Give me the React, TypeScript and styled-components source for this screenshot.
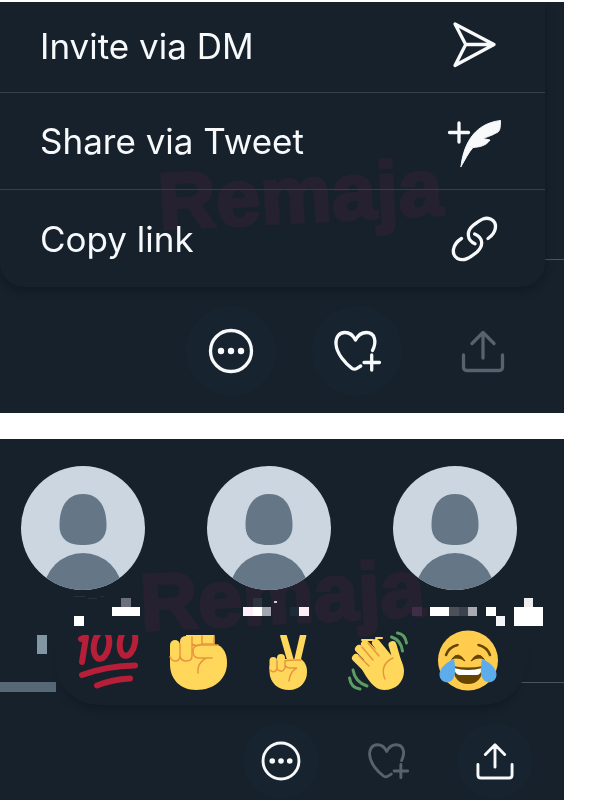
import React from "react";
import styled, { createGlobalStyle } from "styled-components";

const Global = createGlobalStyle`
  * { box-sizing: border-box; }
  html, body { margin: 0; background: #fff; }
  body { font-family: Inter, "Liberation Sans", sans-serif; overflow-x: hidden; }
  #root { display: flow-root; }
`;

const Page = styled.main`
  display: flex;
  flex-direction: column;
  gap: 26px;
  margin-top: 2px;
  padding-right: 36px;
`;

const Panel = styled.section`
  position: relative;
  overflow: hidden;
  background: #17212b;
`;

const Menu = styled.nav`
  position: relative;
  margin-right: 19px;
  border-radius: 0 0 24px 24px;
  background: #17212c;
  box-shadow: 0 3px 8px rgba(4, 12, 24, 0.4);
`;

const MenuItem = styled.button`
  display: flex;
  align-items: center;
  justify-content: space-between;
  width: 100%;
  height: 97px;
  padding: 0 43px 0 40px;
  border: 0;
  border-bottom: 1px solid #35404a;
  background: none;
  color: #f7f9fa;
  font-family: inherit;
  font-size: 35px;
  line-height: 44px;
  text-align: left;
  &:first-child { height: 91px; padding-bottom: 2px; }
  &:last-child { border-bottom: 0; }
`;

const Icon = styled.svg<{ $size: number }>`
  display: block;
  flex: none;
  width: ${(p) => p.$size}px;
  height: ${(p) => p.$size}px;
  fill: none;
  stroke: currentColor;
  stroke-width: 3.3;
  stroke-linecap: round;
  stroke-linejoin: round;
`;

const Toolbar = styled.div<{ $compact?: boolean }>`
  display: flex;
  justify-content: flex-end;
  gap: ${(p) => (p.$compact ? 31 : 36)}px;
  padding: ${(p) => (p.$compact ? "18px 31px 1px" : "19px 36px 17px")};
`;

const RoundButton = styled.button<{ $size: number }>`
  display: grid;
  place-items: center;
  width: ${(p) => p.$size}px;
  height: ${(p) => p.$size}px;
  padding: 0;
  border: 0;
  border-radius: 50%;
  background: #17242f;
  color: #f7f9fa;
  &:disabled { background: #16212c; color: #59626b; }
`;

const Rule = styled.span<{ $bottom: number }>`
  position: absolute;
  right: 0;
  bottom: ${(p) => p.$bottom}px;
  width: 60px;
  height: 1px;
  background: #4b555e;
`;

const Watermark = styled.span<{ $left: number; $top: number }>`
  position: absolute;
  left: ${(p) => p.$left}px;
  top: ${(p) => p.$top}px;
  color: #261f30;
  font-family: "Liberation Sans", sans-serif;
  font-size: 80px;
  font-weight: 700;
  line-height: 90px;
  -webkit-text-stroke: 3px #261f30;
  stroke-linejoin: round;
  paint-order: stroke;
  transform: rotate(-3deg);
  mix-blend-mode: lighten;
  pointer-events: none;
`;

const People = styled.div`
  display: flex;
  gap: 62px;
  padding: 27px 0 0 21px;
`;

const Person = styled.div`
  flex: none;
  width: 124px;
`;

const Avatar = styled.svg`
  display: block;
  width: 124px;
  height: 124px;
`;

const BlurredName = styled.svg`
  display: block;
  width: 125px;
  height: 36px;
  overflow: visible;
`;

const Reactions = styled.div`
  position: relative;
  display: flex;
  gap: 30px;
  width: calc(100% - 92px);
  margin-left: 55px;
  padding: 2px 0 13px 23px;
  border-radius: 0 0 44px 44px;
  background: #17212c;
  box-shadow: 0 10px 8px -7px rgba(4, 12, 24, 0.4);
`;

const Reaction = styled.button<{ $cropped?: boolean }>`
  padding: 0;
  border: 0;
  background: none;
  clip-path: ${(p) => (p.$cropped ? "inset(7px -4px -4px -4px)" : "none")};
  svg { display: block; width: 60px; height: 64px; overflow: visible; }
`;

const Speaker = styled.span`
  position: absolute;
  left: 0;
  bottom: 108px;
  width: 56px;
  height: 10px;
  background: #566776;
`;

const SpeakerMark = styled.span`
  position: absolute;
  left: 37px;
  bottom: 146px;
  width: 10px;
  height: 19px;
  background: #8296a4;
`;

const Send = () => (
  <Icon $size={56} viewBox="0 0 56 56">
    <path d="M9 6 48 26.5 9 47.5 19.7 26.5ZM19.7 26.5H48" />
  </Icon>
);

const Feather = () => (
  <Icon $size={56} viewBox="0 0 56 56">
    <path d="M3.5 19.5H22.5M13 10V29" />
    <path
      d="M15 53.5C17 36 25 11 54.5 7.5C54.5 15 54 19 50 20C45 23 40 24 37 25.5L44 27C40 33 33 34 27 34.5C22 40 19 47 15 53.5Z"
      fill="currentColor"
      strokeWidth="1"
    />
  </Icon>
);

const Link = () => (
  <Icon $size={56} viewBox="0 0 56 56">
    <path d="M42 27.5C51 21.5 52 11.5 44.5 8C38 5.5 34 9.5 27 14.5C20 20.5 21 29.5 29 32.8" />
    <path d="M15.5 27.5C6 33.5 5 43.5 11.5 47.5C18 51 24 46.5 31 41C38 34.5 37 26.5 28.7 23" />
  </Icon>
);

const More = ({ size }: { size: number }) => (
  <Icon $size={size} viewBox="0 0 48 48">
    <circle cx="24" cy="24" r="20.5" />
    <g fill="currentColor" stroke="none">
      <circle cx="14" cy="24" r="3.2" />
      <circle cx="24" cy="24" r="3.2" />
      <circle cx="34" cy="24" r="3.2" />
    </g>
  </Icon>
);

const HeartPlus = ({ size }: { size: number }) => (
  <Icon $size={size} viewBox="0 0 48 48">
    <path d="M39.5 23.5C44 15 42 5.5 33.5 5.5C28 5.5 24.5 9 22.5 13C20 8 17 5.5 12 5.5C5.5 5.5 2.5 11 3 17C3.5 27 13 37 19 41.3Q21.5 43 24 41.3L27.7 39" />
    <path d="M38.7 28V43M31 35.5H46.5" />
  </Icon>
);

const Upload = ({ size }: { size: number }) => (
  <Icon $size={size} viewBox="0 0 48 48">
    <path d="M24 31V6M13 16.5 24 5.5 35 16.5M4.5 28V40Q4.5 43.5 8 43.5H40Q43.5 43.5 43.5 40V28" />
  </Icon>
);

type Cell = [x: number, y: number, w: number, h: number, fill: string];

const people: { id: string; cells: Cell[] }[] = [
  {
    id: "a",
    cells: [
      [53, 6, 11, 1, "#26313b"],
      [67, 8, 9, 1, "#26313b"],
      [79, 6, 4, 1, "#26313b"],
      [53, 26, 10, 10, "#fff"],
      [91, 17, 28, 9, "#fff"],
      [100, 8, 10, 9, "#6b707c"],
    ],
  },
  {
    id: "b",
    cells: [
      [46, 8, 9, 9, "#2e3340"],
      [67, 11, 3, 2, "#d0cbd4"],
      [36, 17, 10, 9, "#fceff7"],
      [46, 17, 9, 9, "#fff"],
      [55, 17, 9, 9, "#a3a5b0"],
      [83, 17, 9, 9, "#1c2b35"],
      [92, 17, 10, 9, "#fdeef6"],
    ],
  },
  {
    id: "c",
    cells: [
      [19, 17, 10, 9, "#3f2e47"],
      [37, 17, 19, 9, "#fff"],
      [56, 17, 10, 9, "#4b505a"],
      [66, 17, 9, 9, "#3d434e"],
      [75, 17, 9, 9, "#aaaab2"],
      [93, 17, 10, 9, "#fff"],
      [103, 26, 9, 10, "#f5f5f7"],
      [121, 17, 29, 19, "#fff"],
      [131, 8, 9, 9, "#eeeeef"],
    ],
  },
];

const Hundred = () => (
  <svg viewBox="0 0 60 64" fill="none" stroke="#b71e38" strokeWidth="6" strokeLinecap="round" strokeLinejoin="round">
    <path d="M3 11 8 9 4 34" />
    <ellipse cx="23.5" cy="17" rx="7.5" ry="14" transform="rotate(10 23.5 17)" />
    <ellipse cx="49.5" cy="14" rx="7.5" ry="14" transform="rotate(10 49.5 14)" />
    <path d="M4 47Q28 38 57 37.5M19 57.5Q34 51.5 52 50.5" />
  </svg>
);

const Fist = () => (
  <svg viewBox="0 0 60 64" fill="none" stroke="#e8963d" strokeWidth="1.5" strokeLinecap="round">
    <path d="M2 28V36C2 51 12 62 28 62C46 62 59 51 59 35C59 26 56 20 50 17L24 15Z" fill="#ffd75a" stroke="none" />
    <path d="M18 7H46.5V20H18Z" fill="#ffd75a" stroke="none" />
    <rect x="2" y="12" width="10" height="21" rx="5" fill="#ffd75a" stroke="none" />
    <rect x="12" y="8" width="12" height="25" rx="5.5" fill="#ffd75a" stroke="none" />
    <path d="M2 29Q4 33 7 33Q12 33 12 28V16M12 28Q13 33 18 33Q24 33 24 28V9M24 16Q29 19 34 16V8M34 16H46V9" />
    <path d="M50 17H31Q25 18 25 23Q25 30 31 30H44M38 30Q29 35 30 45" />
  </svg>
);

const Victory = () => (
  <svg viewBox="0 0 60 64" fill="none" stroke="#e8963d" strokeWidth="1.5" strokeLinecap="round">
    <path d="M25.5 8 33 34M45 8 39 34" stroke="#ffd75a" strokeWidth="6.5" />
    <path d="M11.5 38V44C12 55 20 62 31 62C42 62 49 54 49 44C49 38 47 34 43 31H24Z" fill="#ffd75a" stroke="none" />
    <rect x="11.5" y="29" width="7.5" height="15" rx="3.7" fill="#ffd75a" stroke="none" />
    <rect x="19" y="26" width="8" height="18" rx="4" fill="#ffd75a" stroke="none" />
    <path d="M12 42Q16 46 19 41V33M19 41Q24 46 27 40V33Q30 32 43 32M27 33Q26 40 32 40H39Q32 43 31 53" />
  </svg>
);

const Wave = () => (
  <svg viewBox="0 0 60 64" fill="none" strokeLinecap="round">
    <g stroke="#ffd75a" strokeWidth="8">
      <path d="M8 30 25 47M11 21 29 39M17 16 34 33M28 15 42 32M44.5 17 50 36" />
      <path d="M14 12H25M28 10H34" strokeWidth="2" />
    </g>
    <path d="M12 38 20 25 35 24 44 30 47 20C50 27 56 35 56 43C56 54 48 62 36 62C26 62 20 52 12 38Z" fill="#ffd75a" />
    <path d="M11 28 21 38M14 19 25 32M20 15 31 28M45 30C36 34 33 42 37 51" stroke="#e8963d" strokeWidth="1.5" />
    <path d="M49.5 5Q57 6 58.5 15M43.5 9Q53 12 54.5 23M5 42Q7 54 19 58M1.5 50Q3 60 12 61" stroke="#5c9e61" strokeWidth="3" />
  </svg>
);

const Joy = () => (
  <svg viewBox="0 0 60 64" fill="none" strokeLinecap="round">
    <circle cx="30" cy="32.5" r="30" fill="#ffcc4d" />
    <path d="M8 27Q11 19 19.5 17M52 27Q49 19 40.5 17" stroke="#664500" strokeWidth="2.5" />
    <path d="M14 31Q20 22 27 33Q20 28 14 31ZM46 31Q40 22 33 33Q40 28 46 31Z" fill="#664500" stroke="#664500" />
    <path d="M15 38Q30 41 45 38C45 50 39 56 30 56C21 56 15 50 15 38Z" fill="#664500" />
    <path d="M16 40Q30 44 44 40Q43 47 39 47H21Q17 46 16 40Z" fill="#fff" />
    <path d="M16 31C8 34 1 41 1.5 47C2 53 7 55 11 54C18 52 18 42 16 31ZM44 31C52 34 59 41 58.5 47C58 53 53 55 49 54C42 52 42 42 44 31Z" fill="#5dadec" />
  </svg>
);

const menu = [
  { label: "Invite via DM", Glyph: Send },
  { label: "Share via Tweet", Glyph: Feather },
  { label: "Copy link", Glyph: Link },
];

const reactions = [
  { label: "Hundred points", Glyph: Hundred, cropped: true },
  { label: "Raised fist", Glyph: Fist, cropped: true },
  { label: "Victory hand", Glyph: Victory, cropped: true },
  { label: "Waving hand", Glyph: Wave, cropped: false },
  { label: "Tears of joy", Glyph: Joy, cropped: false },
];

export default function App() {
  return (
    <>
      <Global />
      <Page>
        <Panel>
          <Rule $bottom={153} />
          <Menu aria-label="Share">
            {menu.map(({ label, Glyph }) => (
              <MenuItem key={label}>
                {label}
                <Glyph />
              </MenuItem>
            ))}
          </Menu>
          <Toolbar>
            <RoundButton $size={90} aria-label="More"><More size={48} /></RoundButton>
            <RoundButton $size={90} aria-label="React"><HeartPlus size={48} /></RoundButton>
            <RoundButton $size={90} aria-label="Share" disabled><Upload size={48} /></RoundButton>
          </Toolbar>
          <Watermark $left={158} $top={148}>Remaja</Watermark>
        </Panel>
        <Panel>
          <Speaker />
          <SpeakerMark />
          <Rule $bottom={117} />
          <People>
            {people.map(({ id, cells }) => (
              <Person key={id}>
                <Avatar viewBox="0 0 124 124" role="img" aria-label="Listener">
                  <defs><clipPath id={`face-${id}`}><circle cx="62" cy="62" r="62" /></clipPath></defs>
                  <g clipPath={`url(#face-${id})`}>
                    <rect width="124" height="124" fill="#ccd6e0" />
                    <path d="M62 28C78 28 85.5 41 85.5 59C85.5 74 76 79 62 79C48 79 38.5 74 38.5 59C38.5 41 46 28 62 28Z" fill="#657786" />
                    <ellipse cx="62" cy="125" rx="39" ry="38" fill="#657786" />
                  </g>
                </Avatar>
                <BlurredName viewBox="0 0 125 36" shapeRendering="crispEdges">
                  {cells.map(([x, y, w, h, fill]) => (
                    <rect key={`${x}-${y}`} x={x} y={y} width={w} height={h} fill={fill} />
                  ))}
                </BlurredName>
              </Person>
            ))}
          </People>
          <Reactions>
            {reactions.map(({ label, Glyph, cropped }) => (
              <Reaction key={label} aria-label={label} $cropped={cropped}><Glyph /></Reaction>
            ))}
          </Reactions>
          <Toolbar $compact>
            <RoundButton $size={76} aria-label="More"><More size={42} /></RoundButton>
            <RoundButton $size={76} aria-label="React" disabled><HeartPlus size={42} /></RoundButton>
            <RoundButton $size={76} aria-label="Share"><Upload size={42} /></RoundButton>
          </Toolbar>
          <Watermark $left={140} $top={112}>Remaja</Watermark>
        </Panel>
      </Page>
    </>
  );
}
